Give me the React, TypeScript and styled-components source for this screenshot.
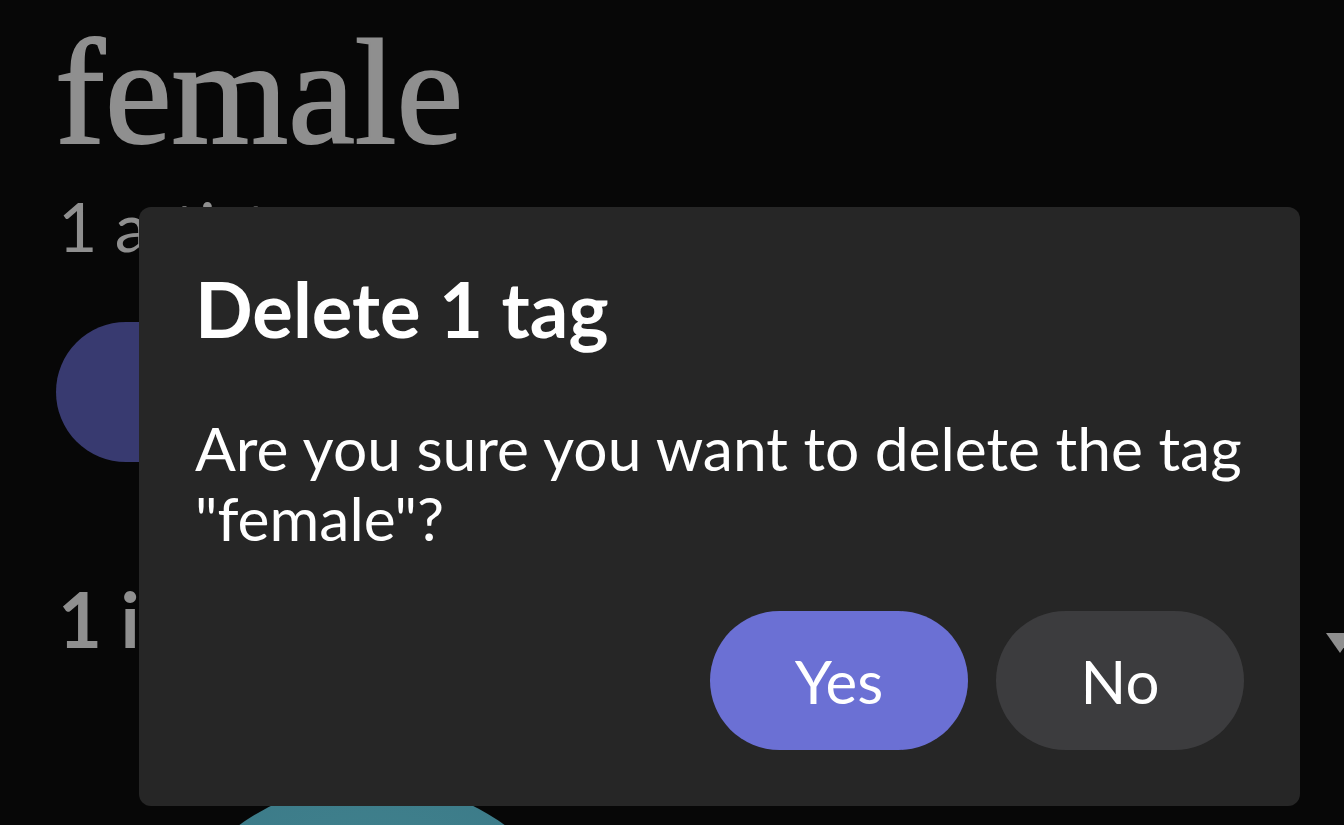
import React from "react";
import styled, { createGlobalStyle } from "styled-components";

const GlobalStyle = createGlobalStyle`
  html, body {
    margin: 0;
    padding: 0;
    background: #070707;
    overflow: hidden;
  }
  body {
    font-family: Lato, "Noto Sans", sans-serif;
    width: 1344px;
    height: 825px;
  }
`;

const Page = styled.main`
  display: flex;
  flex-direction: column;
  padding: 17px 0 0 58px;
  height: 825px;
  box-sizing: border-box;
  overflow: hidden;

  & > * {
    flex-shrink: 0;
  }
`;

const TagName = styled.h1`
  margin: 0 0 0 -3px;
  font-family: "Liberation Serif", "Times New Roman", serif;
  font-weight: 400;
  font-size: 150px;
  line-height: 150px;
  color: #8f8f8f;
  -webkit-text-stroke: 2px #8f8f8f;
  letter-spacing: 0;
`;

const Count = styled.div`
  margin-top: 18px;
  font-size: 68px;
  line-height: 82px;
  color: #8f8f8f;
`;

const PlayButton = styled.div`
  margin-top: 55px;
  margin-left: -2px;
  width: 420px;
  height: 140px;
  border-radius: 70px;
  background: #383a70;
`;

const SectionRow = styled.div`
  display: flex;
  align-items: flex-start;
  justify-content: space-between;
  margin-top: 111px;
  margin-right: -10px;
`;

const SectionTitle = styled.h2`
  margin: 0;
  font-size: 76px;
  font-weight: 700;
  line-height: 91px;
  color: #8f8f8f;
`;

const SortArrow = styled.svg`
  width: 28px;
  height: 20px;
  margin-top: 60px;
  flex: none;
`;

const Grid = styled.div`
  display: grid;
  grid-template-columns: 452px;
  padding-left: 88px;
  margin-top: 118px;
`;

const Artwork = styled.div`
  width: 452px;
  height: 452px;
  border-radius: 50%;
  background: radial-gradient(circle at 50% 40%, #43858f 0%, #3c7b89 60%, #35707f 100%);
`;

const Dialog = styled.div`
  position: fixed;
  left: 139px;
  top: 207px;
  width: 1161px;
  box-sizing: border-box;
  padding: 55px 56px 56px 56px;
  border-radius: 12px;
  background: #262626;
  display: flex;
  flex-direction: column;
`;

const DialogTitle = styled.h2`
  margin: 0;
  font-size: 76px;
  font-weight: 700;
  line-height: 94px;
  color: #ffffff;
`;

const DialogText = styled.p`
  margin: 57px 0 0 0;
  font-size: 60.5px;
  line-height: 70px;
  color: #ffffff;
`;

const Actions = styled.div`
  display: flex;
  justify-content: flex-end;
  gap: 28px;
  margin-top: 58px;
`;

const ActionButton = styled.button<{ $primary?: boolean }>`
  height: 139px;
  min-width: ${(p) => (p.$primary ? "258px" : "248px")};
  padding: 0 40px;
  border: none;
  border-radius: 70px;
  background: ${(p) => (p.$primary ? "#6b70d4" : "#3c3c3e")};
  color: #ffffff;
  font-family: Lato, "Noto Sans", sans-serif;
  font-size: 60px;
  font-weight: 400;
  display: flex;
  align-items: center;
  justify-content: center;
`;

export default function App() {
  return (
    <>
      <GlobalStyle />
      <Page>
        <TagName>female</TagName>
        <Count>1 artist</Count>
        <PlayButton />
        <SectionRow>
          <SectionTitle>1 item</SectionTitle>
          <SortArrow viewBox="0 0 28 20">
            <path d="M0 0 H28 L14 20 Z" fill="#8f8f8f" />
          </SortArrow>
        </SectionRow>
        <Grid>
          <Artwork />
        </Grid>
      </Page>
      <Dialog role="dialog">
        <DialogTitle>Delete 1 tag</DialogTitle>
        <DialogText>Are you sure you want to delete the tag "female"?</DialogText>
        <Actions>
          <ActionButton $primary>Yes</ActionButton>
          <ActionButton>No</ActionButton>
        </Actions>
      </Dialog>
    </>
  );
}
